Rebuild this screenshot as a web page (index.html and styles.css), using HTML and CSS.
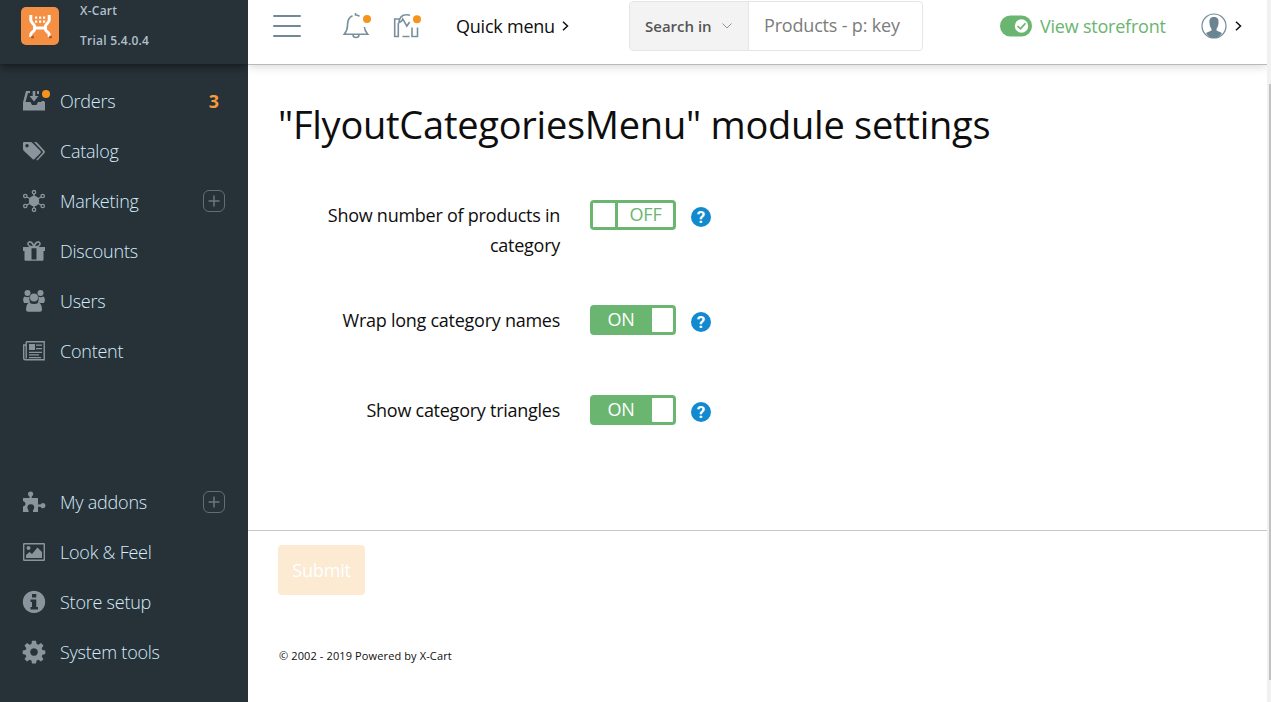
FILE: index.html
```html
<!DOCTYPE html>
<html lang="en">
<head>
<meta charset="utf-8">
<title>FlyoutCategoriesMenu module settings</title>
<link rel="stylesheet" href="styles.css">
</head>
<body>
<div class="app">
  <aside class="sidebar">
    <div class="brand">
      <svg class="logo" width="38" height="38" viewBox="0 0 38 38">
        <rect width="38" height="38" rx="5" fill="#f58f43"/>
        <path d="M9.800 8v5c0 3 3.700 4 3.700 6.500v3c0 2-3.700 2.500-3.700 5V30M28.200 8v5c0 3-3.700 4-3.700 6.500v3c0 2 3.700 2.500 3.700 5V30" fill="none" stroke="#fff" stroke-width="3"/>
        <path d="M12.500 21h13" stroke="#fff" stroke-width="3"/>
        <path d="M14 9.500h2.200v2.200H14zM18 9.500h2.200v2.200H18zM22 9.500h2.200v2.200H22zM14 13.500h2.200v2.200H14zM18 13.500h2.200v2.200H18zM22 13.500h2.200v2.200H22z" fill="#fff"/>
        <circle cx="11.500" cy="30" r="1.500" fill="#b8562b"/><circle cx="29.500" cy="30" r="1.500" fill="#b8562b"/>
      </svg>
      <div class="brand-text"><div>X-Cart</div><div>Trial 5.4.0.4</div></div>
    </div>
    <nav class="menu">
      <a class="item"><svg class="icon" viewBox="0 0 22 22"><path d="M0 20.500v-8L3 1h4v2H5L2.500 12h5l1.500 3h4.500l1.500-3H19l-1-1h3l1 1.500v8zM9.700 1h2.600v5h3.200L11 11.500 6.500 6h3.200zM14 1h2v3h-2z"/></svg><span class="dot dot-orders"></span><span class="label">Orders</span><b class="count">3</b></a>
      <a class="item"><svg class="icon" viewBox="0 0 22 22"><path fill-rule="evenodd" d="M0 3q0-1 1-1h6.500q1 0 2 1l8 8q1 1 0 2l-6 6q-1 1-2 0L1 11q-1-1-1-2zM4 4a1.700 1.700 0 1 0 .01 0z"/><path d="M11 2h1.500q1 0 1.700.7l7.300 8q1 1 0 2.200l-6.500 7q-1 .8-1.700-.2l6.200-6.700q1-1 0-2z"/></svg><span class="label">Catalog</span></a>
      <a class="item"><svg class="icon" viewBox="0 0 22 22"><circle cx="11" cy="11" r="5.200"/><path class="line" d="M11 4v14M4 7l14 8M18 7L4 15"/><g class="rings"><circle cx="11" cy="2.200" r="1.700"/><circle cx="11" cy="19.800" r="1.700"/><circle cx="2.300" cy="6" r="1.700"/><circle cx="19.700" cy="6" r="1.700"/><circle cx="2.300" cy="16" r="1.700"/><circle cx="19.700" cy="16" r="1.700"/></g></svg><span class="label">Marketing</span><span class="plus"><svg viewBox="0 0 20 20"><path d="M10 4.500v11M4.500 10h11"/></svg></span></a>
      <a class="item"><svg class="icon" viewBox="0 0 22 22"><path d="M0 7h8.500v4H0zM13.500 7H22v4h-8.500zM8.500 7h5v1.200h-5zM1.500 10.800h7v10H2.500q-1 0-1-1zM13.500 10.800h7v9q0 1-1 1h-6zM8.500 19.500h5v1.300h-5z"/><path class="ribbon" d="M11 7C8 7 4.500 6 5 3.500S9.500 1 11 7c1.500-6 5.500-6 6-3.500S14 7 11 7z"/></svg><span class="label">Discounts</span></a>
      <a class="item"><svg class="icon" viewBox="0 0 22 22"><circle cx="4.500" cy="3" r="3"/><circle cx="17.500" cy="3" r="3"/><path d="M1.500 6.500q3 1.500 5.200 0-1 4 .8 6L5 13H1q-2-4 .5-6.500zM20.500 6.500q-3 1.500-5.200 0 1 4-.8 6l2.500.5h4q2-4-.5-6.500z"/><circle cx="11" cy="7.500" r="4"/><path d="M6 12.500q5 3 10 0 3 2 3 7 0 2.200-2 2.200H5q-2 0-2-2.200 0-5 3-7z"/></svg><span class="label">Users</span></a>
      <a class="item"><svg class="icon" viewBox="0 0 22 22"><path class="line" d="M3.200 1.700h18v18.100H2.500Q.7 19.800.7 18V5h2.500v13.500M3.200 1.700v16"/><path d="M6 4h6v6H6zM13 4.500h6v1.300h-6zM13 8h6v1.300h-6zM6 11.700h13V13H6zM6 14.300h10v1.300H6zM6 16.900h12v1.300H6z"/></svg><span class="label">Content</span></a>
    </nav>
    <nav class="menu menu-bottom">
      <a class="item"><svg class="icon" viewBox="0 0 22 22"><path d="M0 7h6.500V5.500Q5 4.700 5 3a2.600 2.600 0 0 1 5.200 0q0 1.700-1.500 2.500V7H15v6.500h2.500q.8-1.500 2.300-1.500a2.500 2.500 0 0 1 0 5.200q-1.500 0-2.300-1.500H15V21h-5v-2q1.200-.8 1.200-2.300a3.400 3.400 0 0 0-6.800 0Q4.400 18.200 5.500 19v2H0v-5.500q3-1 2.500-3T0 10z"/></svg><span class="label">My addons</span><span class="plus"><svg viewBox="0 0 20 20"><path d="M10 4.500v11M4.500 10h11"/></svg></span></a>
      <a class="item"><svg class="icon" viewBox="0 0 22 22"><rect class="line" x=".7" y="2.700" width="20.600" height="16.600" rx=".5"/><circle cx="5.500" cy="7" r="2"/><path d="M3 17v-3l3.500-3 2.500 2 5.500-6.500L19 11v6z"/></svg><span class="label">Look &amp; Feel</span></a>
      <a class="item"><svg class="icon" viewBox="0 0 22 22"><path fill-rule="evenodd" d="M11-.3a11.200 11.200 0 1 0 .01 0zM9 3h4.300v3.500H9zM7.500 8.500h5.800V16H15v2.500H7.500V16H9v-5H7.500z"/></svg><span class="label">Store setup</span></a>
      <a class="item"><svg class="icon" viewBox="0 0 22 22"><path fill-rule="evenodd" d="M9-.2h4l.6 3.200 1.800.8L18 1.900 20.500 4.400l-1.800 2.800.7 1.800 2.900.5v3.600l-2.900.6-.7 1.800 1.800 2.700-2.500 2.400-2.700-1.800-1.700.7-.6 3H9l-.6-3-1.800-.8-2.600 1.900-2.500-2.500 1.800-2.700-.7-1.700-2.900-.6V9.500L2.600 9l.7-1.800L1.500 4.400 4 1.900l2.700 1.800L8.400 3zM11 7.200a3.800 3.800 0 1 0 .01 0z"/></svg><span class="label">System tools</span></a>
    </nav>
  </aside>

  <div class="page">
    <header class="topbar">
      <svg class="burger" width="28" height="24" viewBox="0 0 28 24"><path d="M1 2h26M1 12h26M1 22h26"/></svg>
      <svg class="bell" width="30" height="28" viewBox="0 0 30 28"><g class="stroke"><path d="M9.500 3.700C5 5.500 4.500 9 4.500 13.500c0 4-1 6-3.300 8.800h23.500C22 19 21.500 17 21.400 15M12.500 1v2q2 0 4 1.200M10 22.800a3 2.700 0 0 0 6 0"/></g><circle cx="24" cy="7" r="4"/></svg>
      <svg class="store" width="30" height="28" viewBox="0 0 30 28"><g class="stroke"><path d="M7 7H1.700v17.500h3.600V11M6 10Q7 3 13 2.800q3-.2 4 .7M5.300 11q4-1.500 4.500-3.800 3 5 4 7l2.800-4.200M9.500 24.500h7M19 15.500v9h5.500v-9"/></g><circle cx="24" cy="7.300" r="4"/></svg>
      <div class="quick">Quick menu</div>
      <svg class="chev" width="7" height="10" viewBox="0 0 7 10"><path d="M1 .8 5.500 5 1 9.200"/></svg>
      <div class="search">
        <div class="search-in"><span>Search in</span><svg width="10" height="6" viewBox="0 0 10 6"><path d="M.5.500 5 5 9.500.5"/></svg></div>
        <div class="query">Products - p: key</div>
      </div>
      <svg class="switch" width="32" height="22" viewBox="0 0 32 22"><rect y=".5" width="32" height="21" rx="10.500" fill="#6ab570"/><circle cx="21.500" cy="11" r="6.700" fill="#fff"/><path d="m17.500 11 3 2.800 5-5.500" fill="none" stroke="#6ab570" stroke-width="1.700"/></svg>
      <div class="storefront">View storefront</div>
      <svg class="avatar" width="26" height="26" viewBox="0 0 26 26"><circle cx="13" cy="13" r="12" fill="#fff" stroke="#728b98" stroke-width="1.200"/><path d="M13 4c4 0 4.800 2.500 4.500 6-.2 3-1 4.500-2 6v1.500l5.500 2.500q-3 5-8 5t-8-5l5.500-2.500V16c-1-1.500-1.800-3-2-6C8.200 6.500 9 4 13 4z" fill="#6b8491"/></svg>
      <svg class="chev chev-user" width="7" height="10" viewBox="0 0 7 10"><path d="M1 .8 5.500 5 1 9.200"/></svg>
    </header>
    <main class="content">
      <h1>"FlyoutCategoriesMenu" module settings</h1>
      <div class="row row-tall"><label>Show number of products in category</label><div class="toggle off"><i></i><span>OFF</span></div><span class="help">?</span></div>
      <div class="row"><label>Wrap long category names</label><div class="toggle on"><span>ON</span><i></i></div><span class="help">?</span></div>
      <div class="row"><label>Show category triangles</label><div class="toggle on"><span>ON</span><i></i></div><span class="help">?</span></div>
    </main>
    <footer class="footer">
      <button class="submit" disabled>Submit</button>
      <p>© 2002 - 2019 Powered by X-Cart</p>
    </footer>
  </div>
  <div class="scroll"><div class="thumb"></div></div>
</div>
</body>
</html>
```
FILE: styles.css
```css
* { box-sizing: border-box; }
body { margin: 0; font-family: "Open Sans", sans-serif; font-size: 18px; color: #0e0e0e; background: #fff; overflow: hidden; }
svg { display: block; flex: none; }
.app { display: grid; grid-template-columns: 248px 1019px 4px; height: 702px; }

.sidebar { background: #263238; color: #d6ebfb; }
.brand { height: 64px; display: flex; padding-left: 21px; box-shadow: 0 2px 9px rgba(0, 0, 0, .55); clip-path: inset(0 0 -14px 0); }
.logo { margin-top: 7px; }
.brand-text { margin: -4px 0 0 21px; font-size: 12px; font-weight: 600; line-height: 30px; letter-spacing: .24px; color: #b3c0cc; }
.menu { padding-top: 12px; }
.menu-bottom { padding-top: 101px; }
.item { height: 50px; display: flex; align-items: center; padding: 0 23px; position: relative; }
.icon { width: 22px; height: 22px; fill: #8a949d; overflow: visible; }
.icon .line { fill: none; stroke: #8a949d; stroke-width: 1.4; }
.icon .ribbon { fill: none; stroke: #8a949d; stroke-width: 1.6; }
.icon .rings { fill: #263238; stroke: #8a949d; stroke-width: 1.3; }
.label { margin-left: 15px; flex: 1; font-weight: 300; line-height: 50px; letter-spacing: -.23px; white-space: nowrap; }
.dot { position: absolute; width: 8px; height: 8px; border-radius: 50%; background: #f6921e; }
.dot-orders { left: 42px; top: 14px; }
.count { color: #f89a3c; margin-right: 6px; }
.plus { width: 22px; height: 22px; border: 1px solid #626e75; border-radius: 6px; }
.plus svg { width: 20px; height: 20px; fill: none; stroke: #6c7880; stroke-width: 1.5; }

.page { min-width: 0; display: flex; flex-direction: column; }
.topbar { height: 65px; display: flex; align-items: center; padding: 0 0 12px 25px; border-bottom: 1px solid #b9b9b9; box-shadow: 0 2px 9px rgba(0, 0, 0, .15); clip-path: inset(0 0 -14px 0); }
.burger { fill: none; stroke: #708997; stroke-width: 2; stroke-linecap: round; }
.bell { margin-left: 42px; flex: none; }
.store { margin-left: 20px; }
.bell, .store { fill: #f6921e; }
.stroke { fill: none; stroke: #78909c; stroke-width: 1.6; }
.quick { margin-left: 33px; width: 99px; letter-spacing: -.23px; white-space: nowrap; }
.chev { margin-left: 7px; fill: none; stroke: #111; stroke-width: 1.5; }
.chev-user { margin-left: 8px; }
.search { margin: -1px 0 0 60px; width: 294px; height: 50px; border: 1px solid #e5e5e5; border-radius: 4px; display: flex; overflow: hidden; line-height: 48px; }
.search-in { width: 119px; flex: none; padding-left: 15px; display: flex; align-items: center; gap: 10px; background: #f3f3f3; border-right: 1px solid #e5e5e5; font-size: 15px; font-weight: 600; color: #555; }
.search-in svg { fill: none; stroke: #8a949d; stroke-width: 1; }
.query { padding-left: 15px; line-height: 47px; letter-spacing: -.18px; color: #7c7c7c; white-space: nowrap; }
.switch { margin-left: 77px; }
.storefront { margin-left: 8px; width: 127px; letter-spacing: -.22px; color: #6ab570; white-space: nowrap; }
.avatar { margin-left: 34px; }

.content { height: 465px; padding-left: 30px; }
h1 { margin: 32px 0 0; font-size: 38px; font-weight: 400; line-height: 54px; letter-spacing: -.25px; white-space: nowrap; }
.row { display: flex; align-items: flex-start; height: 90px; }
.row-tall { height: 105px; }
h1 + .row { margin-top: 49px; }
.row label { width: 282px; padding-left: 20px; text-align: right; line-height: 30px; letter-spacing: -.26px; }
.toggle { width: 86px; height: 30px; margin-left: 30px; border: 3px solid #6ab570; border-radius: 4px; display: flex; line-height: 23px; letter-spacing: -.2px; text-align: center; }
.toggle span { flex: 1; }
.toggle i { background: #fff; }
.off { color: #6ab570; }
.off i { width: 25px; border-right: 3px solid #6ab570; }
.on { background: #6ab570; color: #fff; }
.on span { padding-right: 3px; }
.on i { width: 21px; border-radius: 1px; }
.help { width: 20px; height: 20px; margin: 7px 0 0 15px; border-radius: 50%; background: #118acf; color: #fff; font: 700 17px/20px Roboto, sans-serif; text-align: center; }

.footer { flex: 1; border-top: 1px solid #c7c7c7; padding: 14px 30px 0; }
.submit { display: block; width: 87px; height: 50px; border: 0; border-radius: 4px; padding: 0; background: #fcead3; color: #fff; font: 400 18px "Open Sans", sans-serif; letter-spacing: -.15px; }
.footer p { margin: 53px 0 0 1px; font-size: 11px; line-height: 16px; letter-spacing: .12px; }

.scroll { background: #f1f1f1; padding: 84px 0 0 2px; }
.thumb { height: 596px; background: #c1c1c1; }
```
